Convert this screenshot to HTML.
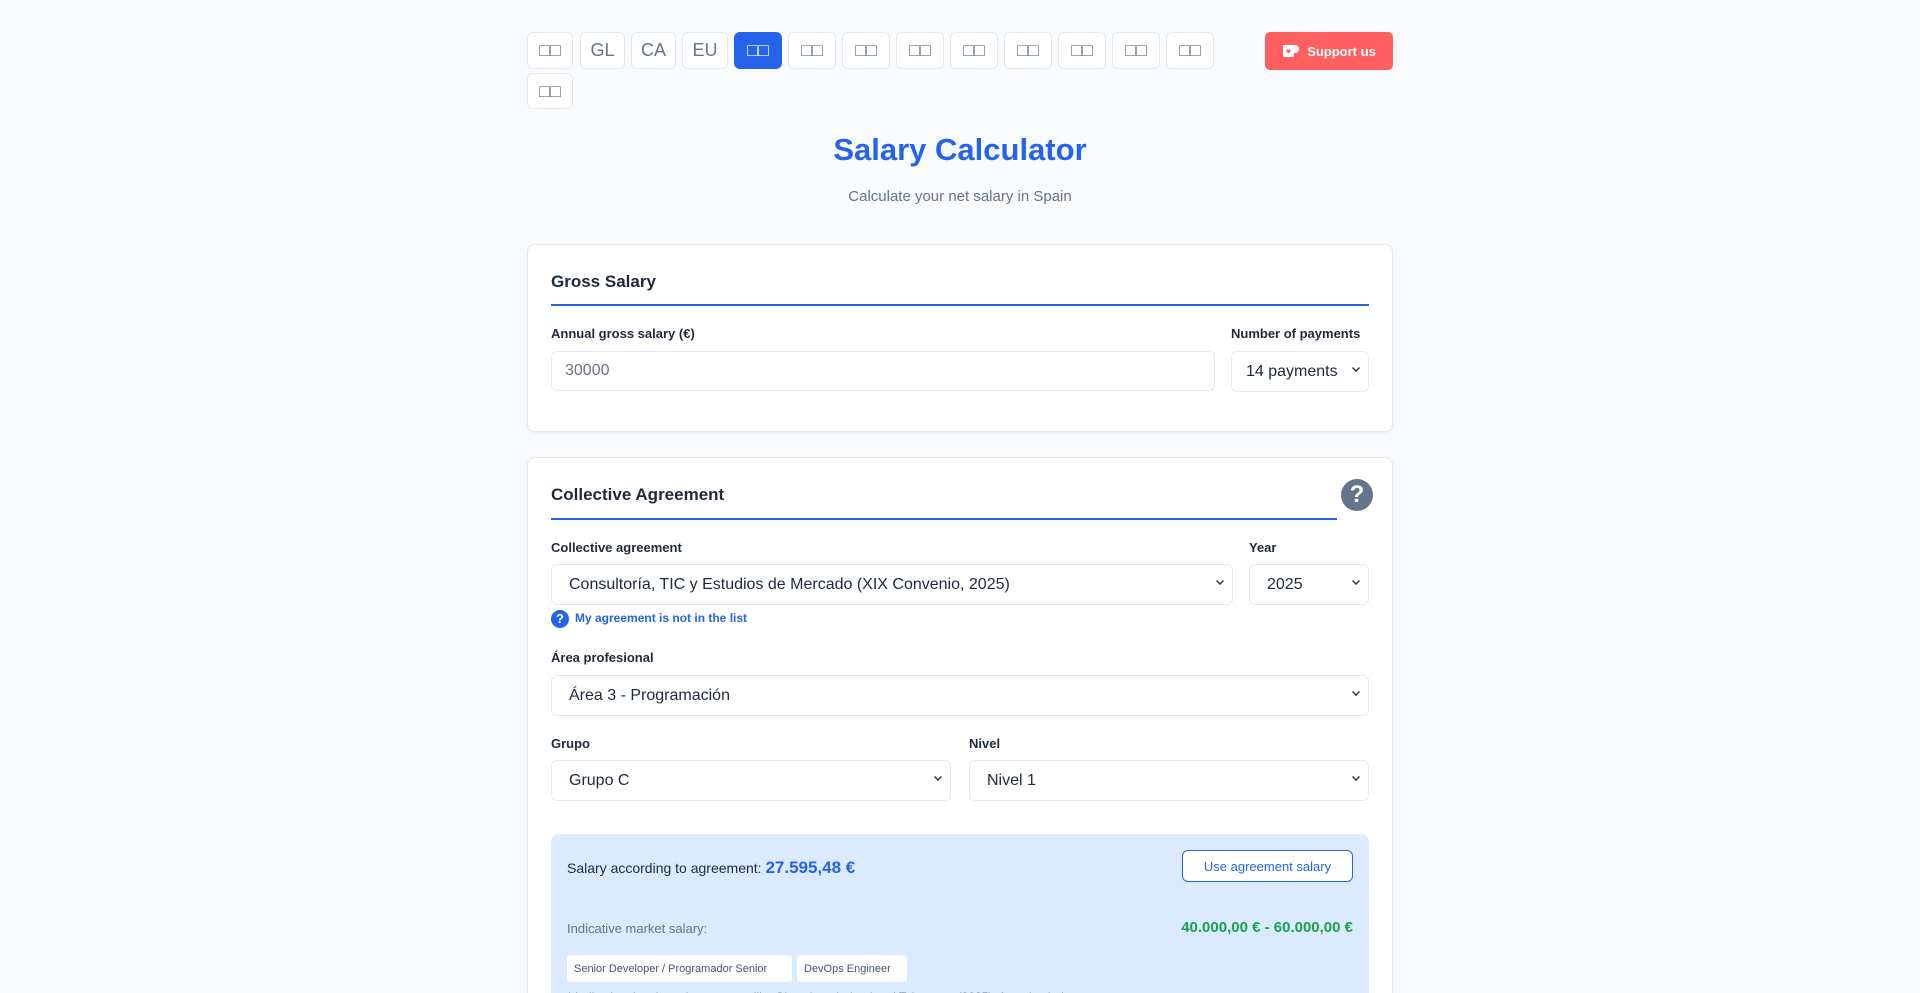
<!DOCTYPE html>
<html><head><meta charset="utf-8"><style>
*{box-sizing:border-box;margin:0;padding:0}
html,body{width:1920px;height:993px;overflow:hidden}
body{background:#f8fafc;font-family:"Liberation Sans","Noto Sans CJK SC",sans-serif;color:#1e293b;position:relative}
.a{position:absolute}
.lb{position:absolute;top:32px;height:37px;border:1px solid #e2e8f0;border-radius:6px;background:#fff;color:#64748b;font-size:18px;display:flex;align-items:center;justify-content:center}
.card{position:absolute;left:527px;width:866px;background:#fff;border:1px solid #e2e8f0;border-radius:8px;box-shadow:0 1px 3px rgba(0,0,0,.05)}
.h{position:absolute;font-weight:bold;font-size:18px;color:#1e293b}
.line{position:absolute;height:2px;background:#2563eb}
.lab{position:absolute;font-size:14px;font-weight:bold;color:#1e293b}
.in{position:absolute;height:41px;border:1px solid #e2e8f0;border-radius:6px;background:#fff;font-size:16px;display:flex;align-items:center;padding-left:17px;color:#1e293b;white-space:nowrap}
.in .ch{position:absolute;right:8px;top:12px;width:8px;height:8px;border-right:2px solid #333;border-bottom:2px solid #333;transform:rotate(45deg) scale(.7)}
.tag{position:absolute;top:955px;height:27px;background:#fff;border-radius:3px;font-size:11px;color:#475569;display:flex;align-items:center;padding:0 7px;white-space:nowrap}
</style></head><body>
<div class="lb" style="left:527px;width:46px">□□</div>
<div class="lb" style="left:580px;width:45px">GL</div>
<div class="lb" style="left:631px;width:45px">CA</div>
<div class="lb" style="left:682px;width:46px">EU</div>
<div class="lb" style="left:734px;width:48px;background:#2563eb;border-color:#2563eb;color:#fff">□□</div>
<div class="lb" style="left:788px;width:48px">□□</div>
<div class="lb" style="left:842px;width:48px">□□</div>
<div class="lb" style="left:896px;width:48px">□□</div>
<div class="lb" style="left:950px;width:48px">□□</div>
<div class="lb" style="left:1004px;width:48px">□□</div>
<div class="lb" style="left:1058px;width:48px">□□</div>
<div class="lb" style="left:1112px;width:48px">□□</div>
<div class="lb" style="left:1166px;width:48px">□□</div>
<div class="lb" style="left:527px;top:73px;width:46px;height:36px">□□</div>
<div class="a" style="left:1265px;top:32px;width:128px;height:38px;background:#ff5f5f;border-radius:5px;color:#fff;font-size:13px;font-weight:bold;display:flex;align-items:center;justify-content:center;gap:7px"><svg width="18" height="14" viewBox="0 0 18 14"><path d="M1 1h12a4 4 0 0 1 0 8h-1v3a1 1 0 0 1-1 1H2a1 1 0 0 1-1-1z" fill="#fff"/><path d="M6.5 9.5l-2-2a1.2 1.2 0 0 1 2-1.5 1.2 1.2 0 0 1 2 1.5z" fill="#ff5f5f"/></svg>Support us</div>
<div class="a" style="left:0;width:1920px;top:132px;text-align:center;font-size:31px;font-weight:bold;color:#2563eb">Salary Calculator</div>
<div class="a" style="left:0;width:1920px;top:188px;text-align:center;font-size:15px;color:#64748b">Calculate your net salary in Spain</div>

<div class="card" style="top:244px;height:188px"></div>
<div class="h" style="left:551px;top:272px;font-size:17px">Gross Salary</div>
<div class="line" style="left:551px;top:304px;width:818px"></div>
<div class="lab" style="left:551px;top:326px;font-size:13px">Annual gross salary (€)</div>
<div class="lab" style="left:1231px;top:326px;font-size:13px">Number of payments</div>
<div class="in" style="left:551px;top:351px;width:664px;height:40px;color:#6b7280;padding-left:13px">30000</div>
<div class="in" style="left:1231px;top:351px;width:138px;padding-left:14px">14 payments<span class="ch"></span></div>

<div class="card" style="top:457px;height:560px"></div>
<div class="h" style="left:551px;top:485px;font-size:17px">Collective Agreement</div>
<div class="line" style="left:551px;top:518px;width:786px"></div>
<div class="a" style="left:1341px;top:479px;width:32px;height:32px;border-radius:50%;background:#64748b;color:#fff;font-weight:bold;font-size:24px;text-align:center;line-height:32px">?</div>
<div class="lab" style="left:551px;top:540px;font-size:13px">Collective agreement</div>
<div class="lab" style="left:1249px;top:540px;font-size:13px">Year</div>
<div class="in" style="left:551px;top:564px;width:682px">Consultoría, TIC y Estudios de Mercado (XIX Convenio, 2025)<span class="ch"></span></div>
<div class="in" style="left:1249px;top:564px;width:120px">2025<span class="ch"></span></div>
<div class="a" style="left:551px;top:610px;width:18px;height:18px;border-radius:50%;background:#2563eb;color:#fff;font-size:13px;font-weight:bold;text-align:center;line-height:18px">?</div>
<div class="a" style="left:575px;top:611px;font-size:12px;font-weight:bold;color:#2563eb">My agreement is not in the list</div>
<div class="lab" style="left:551px;top:650px;font-size:13px">Área profesional</div>
<div class="in" style="left:551px;top:675px;width:818px">Área 3 - Programación<span class="ch"></span></div>
<div class="lab" style="left:551px;top:736px;font-size:13px">Grupo</div>
<div class="lab" style="left:969px;top:736px;font-size:13px">Nivel</div>
<div class="in" style="left:551px;top:760px;width:400px">Grupo C<span class="ch"></span></div>
<div class="in" style="left:969px;top:760px;width:400px">Nivel 1<span class="ch"></span></div>

<div class="a" style="left:551px;top:834px;width:818px;height:200px;background:#dbeafe;border-radius:8px"></div>
<div class="a" style="left:567px;top:858px;font-size:14px;color:#1e293b">Salary according to agreement: <b style="color:#2563eb;font-size:17px">27.595,48 €</b></div>
<div class="a" style="left:1182px;top:850px;width:171px;height:32px;border:1px solid #2563eb;border-radius:6px;background:#fff;color:#2563eb;font-size:13px;display:flex;align-items:center;justify-content:center">Use agreement salary</div>
<div class="a" style="left:567px;top:921px;font-size:13px;color:#64748b">Indicative market salary:</div>
<div class="a" style="right:567px;top:919px;font-size:15px;font-weight:bold;color:#16a34a">40.000,00 € - 60.000,00 €</div>
<div class="tag" style="left:567px;width:225px">Senior Developer / Programador Senior</div>
<div class="tag" style="left:797px;width:110px">DevOps Engineer</div>
<div class="a" style="left:567px;top:990px;font-size:12px;color:#64748b">* Indicative data based on sources like Glassdoor, Indeed and Tekstream (2025). Actual salaries may vary.</div>
</body></html>
